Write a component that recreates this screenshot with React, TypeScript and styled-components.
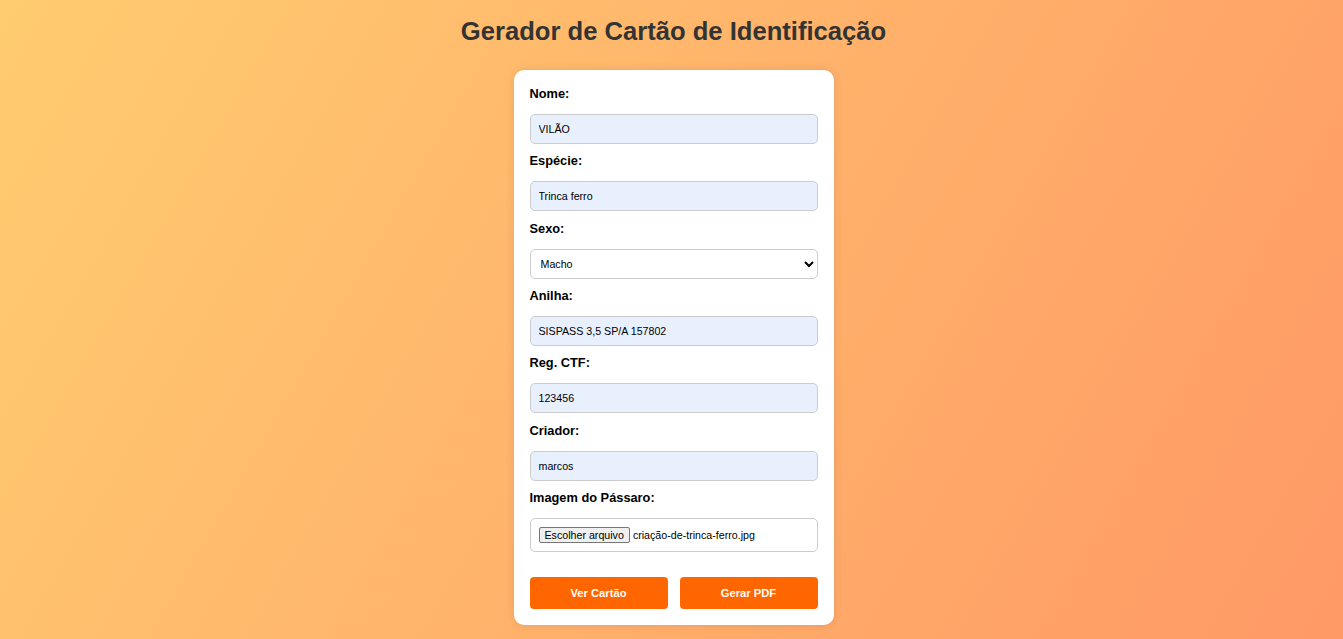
import React from 'react'
import styled, { createGlobalStyle } from 'styled-components'

const GlobalStyle = createGlobalStyle`
  html, body {
    margin: 0;
    padding: 0;
    min-height: 100%;
  }
  body {
    font-family: "Liberation Sans", Arial, sans-serif;
    background: linear-gradient(120deg, #ffcc70 0%, #ff9966 100%);
    min-height: 100vh;
  }
`

const fields = [
  { label: 'Nome:', value: 'VILÃO' },
  { label: 'Espécie:', value: 'Trinca ferro' },
]

const fieldsAfter = [
  { label: 'Anilha:', value: 'SISPASS 3,5 SP/A 157802' },
  { label: 'Reg. CTF:', value: '123456' },
  { label: 'Criador:', value: 'marcos' },
]

const App: React.FC = () => {
  return (
    <>
      <GlobalStyle />
      <StyledPage>
        <StyledTitle>Gerador de Cartão de Identificação</StyledTitle>
        <StyledCard>
          {fields.map(f => (
            <StyledField key={f.label}>
              <StyledLabel>{f.label}</StyledLabel>
              <StyledInput type="text" defaultValue={f.value} />
            </StyledField>
          ))}
          <StyledField>
            <StyledLabel>Sexo:</StyledLabel>
            <StyledSelect defaultValue="Macho">
              <option>Macho</option>
              <option>Fêmea</option>
            </StyledSelect>
          </StyledField>
          {fieldsAfter.map(f => (
            <StyledField key={f.label}>
              <StyledLabel>{f.label}</StyledLabel>
              <StyledInput type="text" defaultValue={f.value} />
            </StyledField>
          ))}
          <StyledField>
            <StyledLabel>Imagem do Pássaro:</StyledLabel>
            <StyledFileBox>
              <StyledFileButton type="button">Escolher arquivo</StyledFileButton>
              <StyledFileName>criação-de-trinca-ferro.jpg</StyledFileName>
            </StyledFileBox>
          </StyledField>
          <StyledActions>
            <StyledButton type="button">Ver Cartão</StyledButton>
            <StyledButton type="button">Gerar PDF</StyledButton>
          </StyledActions>
        </StyledCard>
      </StyledPage>
    </>
  )
}

const StyledPage = styled.main`
  display: flex;
  flex-direction: column;
  align-items: center;
  padding: 16px 0 14px 4px;
`

const StyledTitle = styled.h1`
  margin: 0 0 24px;
  font-size: 25.6px;
  line-height: 30px;
  font-weight: bold;
  color: #333;
`

const StyledCard = styled.section`
  box-sizing: border-box;
  width: 320px;
  padding: 16px 16px 16px;
  background: #fff;
  border-radius: 10px;
  box-shadow: 0 0 10px rgba(0, 0, 0, 0.1);
`

const StyledField = styled.div`
  display: flex;
  flex-direction: column;
  margin-bottom: 9.33px;
`

const StyledLabel = styled.label`
  display: block;
  font-size: 12.8px;
  line-height: 16px;
  font-weight: bold;
  color: #000;
  margin-bottom: 12px;
`

const StyledInput = styled.input`
  box-sizing: border-box;
  width: 100%;
  height: 30px;
  padding: 0 8px;
  font-family: "Liberation Sans", Arial, sans-serif;
  font-size: 10.67px;
  color: #000;
  background: #e8f0fe;
  border: 1px solid #ccc;
  border-radius: 5px;
  outline: none;
`

const StyledSelect = styled.select`
  box-sizing: border-box;
  width: 100%;
  height: 30px;
  padding: 0 6px;
  font-family: "Liberation Sans", Arial, sans-serif;
  font-size: 10.67px;
  color: #000;
  background: #fff;
  border: 1px solid #ccc;
  border-radius: 5px;
`

const StyledFileBox = styled.div`
  box-sizing: border-box;
  display: flex;
  align-items: center;
  height: 34px;
  padding: 0 8px;
  border: 1px solid #ccc;
  border-radius: 5px;
  background: #fff;
  margin-bottom: 16px;
`

const StyledFileButton = styled.button`
  font-family: "Liberation Sans", Arial, sans-serif;
  font-size: 10.67px;
  line-height: 12px;
  padding: 1px 5px;
  background: #efefef;
  border: 1px solid #767676;
  border-radius: 2px;
  color: #000;
  margin-right: 3px;
`

const StyledFileName = styled.span`
  font-size: 10.67px;
  color: #000;
`

const StyledActions = styled.div`
  display: grid;
  grid-template-columns: 1fr 1fr;
  gap: 12px;
`

const StyledButton = styled.button`
  height: 32px;
  border: none;
  border-radius: 4px;
  background: #ff6600;
  color: #fff;
  font-family: "Liberation Sans", Arial, sans-serif;
  font-size: 11.2px;
  font-weight: bold;
  cursor: pointer;
`

export default App
